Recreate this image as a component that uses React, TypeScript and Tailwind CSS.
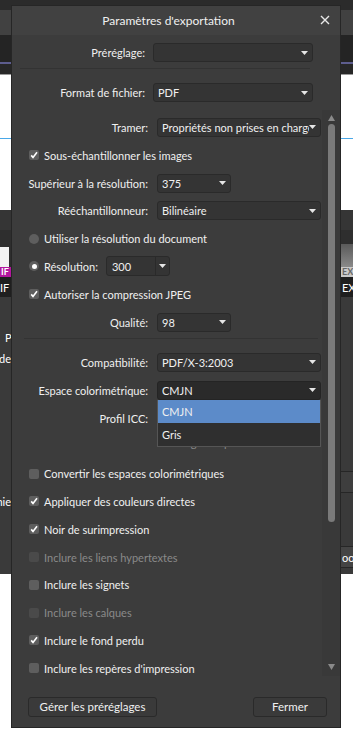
import React from 'react';

const Arrow = () => (
  <svg width="7" height="4" viewBox="0 0 7 4" className="shrink-0">
    <path d="M0 0h7L3.5 4z" fill="#e6e6e6" />
  </svg>
);

interface DropdownProps {
  value?: string;
  className?: string;
  open?: boolean;
  children?: React.ReactNode;
}

const Dropdown: React.FC<DropdownProps> = ({ value = '', className = '', open = false, children }) => (
  <div className={`relative h-[19px] ${className}`}>
    <div
      className={`flex h-full items-center rounded-[3px] border pl-[4px] pr-[4px] ${
        open ? 'border-[#242424] bg-[#2a2a2a]' : 'border-[#2a2a2a] bg-[#343434]'
      }`}
    >
      <span className="flex-1 overflow-hidden whitespace-nowrap">{value}</span>
      <Arrow />
    </div>
    {children}
  </div>
);

const Check: React.FC<{ checked?: boolean; disabled?: boolean }> = ({ checked, disabled }) => (
  <span
    className={`flex h-[10px] w-[10px] shrink-0 items-center justify-center rounded-[2px] ${
      disabled ? 'bg-[#4a4a4a]' : 'bg-[#5e5e5e]'
    }`}
  >
    {checked && (
      <svg width="8" height="8" viewBox="0 0 8 8">
        <path d="M1.2 4.4 3 6.4 7 1.2" stroke="#fff" strokeWidth="1.6" fill="none" />
      </svg>
    )}
  </span>
);

const Radio: React.FC<{ selected?: boolean }> = ({ selected }) => (
  <span className="flex h-[10px] w-[10px] shrink-0 items-center justify-center rounded-full bg-[#5e5e5e]">
    {selected && <span className="h-[5px] w-[5px] rounded-full bg-white" />}
  </span>
);

const Row: React.FC<{ className?: string; children?: React.ReactNode }> = ({ className = '', children }) => (
  <div className={`flex h-[27.8px] shrink-0 items-center ${className}`}>{children}</div>
);

const LabelRow: React.FC<{ label: string; children?: React.ReactNode }> = ({ label, children }) => (
  <Row>
    <span className="w-[136px] shrink-0 whitespace-nowrap text-right">{label}</span>
    <div className="ml-[9px]">{children}</div>
  </Row>
);

const CheckRow: React.FC<{ label: string; checked?: boolean; disabled?: boolean; indent?: boolean; className?: string }> = ({
  label,
  checked,
  disabled,
  indent,
  className = '',
}) => (
  <Row className={`${indent ? 'pl-[145px]' : 'pl-[17px]'} ${className}`}>
    <Check checked={checked} disabled={disabled} />
    <span className={`ml-[5px] whitespace-nowrap ${disabled ? 'text-[#8a8a8a]' : ''}`}>{label}</span>
  </Row>
);

const Background = () => (
  <div className="flex h-full flex-col">
    <div className="h-[10px] bg-[#2b2b2b]" />
    <div className="h-[25px] bg-[#414141]" />
    <div className="h-[27px] bg-[#242424]" />
    <div className="h-[2px] bg-[#5d5d8e]" />
    <div className="h-[10px] bg-[#272727]" />
    <div className="h-px bg-[#9a9a9a]" />
    <div className="h-[63px] bg-white" />
    <div className="h-px bg-[#4aa8e8]" />
    <div className="h-[71px] bg-white" />
    <div className="h-[20px] bg-[#353535]" />
    <div className="h-[10px] bg-[#2e2e2e]" />
    <div className="flex h-[27px] justify-between bg-[#2e2e2e]">
      <div className="mt-[7px] w-[9px] bg-[#f2f2f2]" />
      <div className="mt-[4px] w-[12px] bg-gradient-to-b from-[#5a5a5a] to-[#8a8a8a]" />
    </div>
    <div className="flex h-[10px] justify-between bg-[#2e2e2e] text-[9px] leading-[10px] font-bold">
      <div className="w-[11px] overflow-hidden bg-[#b3179e] pl-[1px] text-white">IF</div>
      <div className="w-[12px] overflow-hidden bg-[#c9c9c9] pl-[1px] text-[#666]">EX</div>
    </div>
    <div className="flex h-[20px] items-center justify-between bg-[#1f1f1f] text-[11px]">
      <div className="w-[11px] overflow-hidden text-white">IF</div>
      <div className="w-[12px] overflow-hidden pl-[1px] text-white">EX</div>
    </div>
    <div className="flex h-[277px] justify-between bg-[#3a3a3a] text-[11px] text-white">
      <div className="flex w-[11px] flex-col">
        <div className="mt-[33px] pl-[5px]">P</div>
        <div className="mt-[6px] flex justify-end overflow-hidden whitespace-nowrap">Mode</div>
        <div className="mt-[128px] flex justify-end overflow-hidden whitespace-nowrap">Graphie</div>
      </div>
      <div className="flex w-[12px] flex-col">
        <div className="mt-[174px] h-px bg-[#262626]" />
        <div className="h-[20px] bg-[#3e3e3e]" />
        <div className="h-px bg-[#262626]" />
        <div className="h-[53px]" />
        <div className="h-px bg-[#262626]" />
        <div className="flex h-[20px] items-center overflow-hidden whitespace-nowrap bg-[#444] pl-[1px]">oo</div>
        <div className="h-px bg-[#262626]" />
      </div>
    </div>
    <div className="flex-1 bg-white" />
  </div>
);

const App: React.FC = () => {
  return (
    <div className="relative h-[745px] w-[353px] overflow-hidden font-['Lato',sans-serif] text-[11px] leading-[15px] text-[#f0f0f0]">
      <Background />

      <div className="absolute left-[11px] top-[5px] flex h-[723px] w-[330px] flex-col border border-[#262626] bg-[#3c3c3c]">
        <div className="relative flex h-[29px] shrink-0 items-center justify-center bg-[#414141] pr-[15px] text-[12px]">
          Paramètres d'exportation
          <svg className="absolute right-[10px] top-[9px]" width="10" height="10" viewBox="0 0 10 10">
            <path d="M1 1l8 8M9 1L1 9" stroke="#e8e8e8" strokeWidth="1.4" />
          </svg>
        </div>

        <div className="mt-[8px] flex items-center">
          <span className="w-[133px] text-right">Préréglage:</span>
          <Dropdown className="ml-[8px] w-[160px]" />
        </div>
        <div className="mx-[8px] mt-[6px] h-px w-[290px] bg-[#333333]" />
        <div className="mt-[14px] flex items-center">
          <span className="w-[133px] text-right">Format de fichier:</span>
          <Dropdown className="ml-[8px] w-[160px]" value="PDF" />
        </div>

        <div className="mt-[8px] flex h-[566px] shrink-0">
          <div className="flex w-[310px] flex-col overflow-hidden pt-[3.6px]">
            <LabelRow label="Tramer:">
              <Dropdown className="w-[164px]" value="Propriétés non prises en charge" />
            </LabelRow>
            <CheckRow label="Sous-échantillonner les images" checked />
            <LabelRow label="Supérieur à la résolution:">
              <Dropdown className="w-[74px]" value="375" />
            </LabelRow>
            <LabelRow label="Rééchantillonneur:">
              <Dropdown className="w-[164px]" value="Bilinéaire" />
            </LabelRow>
            <Row className="pl-[17px]">
              <Radio />
              <span className="ml-[5px]">Utiliser la résolution du document</span>
            </Row>
            <Row className="pl-[17px]">
              <Radio selected />
              <span className="ml-[5px]">Résolution:</span>
              <div className="ml-[8px] flex h-[20px] w-[64px] items-center rounded-[3px] border border-[#2a2a2a] bg-[#343434]">
                <span className="flex-1 pl-[5px]">300</span>
                <div className="flex h-full w-[14px] items-center justify-center border-l border-[#2a2a2a]">
                  <Arrow />
                </div>
              </div>
            </Row>
            <CheckRow label="Autoriser la compression JPEG" checked />
            <LabelRow label="Qualité:">
              <Dropdown className="w-[74px]" value="98" />
            </LabelRow>
            <div className="h-[12.6px] shrink-0 pl-[12px] pr-[4px] pt-[2px]">
              <div className="h-px bg-[#333333]" />
            </div>
            <LabelRow label="Compatibilité:">
              <Dropdown className="w-[164px]" value="PDF/X-3:2003" />
            </LabelRow>
            <div className="relative z-10">
              <LabelRow label="Espace colorimétrique:">
                <Dropdown className="w-[164px]" value="CMJN" open>
                  <div className="absolute left-0 top-[19px] w-full border border-t-0 border-[#555] bg-[#2f2f2f]">
                    <div className="flex h-[23px] items-center bg-[#5c8bc9] pl-[4px]">CMJN</div>
                    <div className="flex h-[23px] items-center pl-[4px]">Gris</div>
                  </div>
                </Dropdown>
              </LabelRow>
            </div>
            <LabelRow label="Profil ICC:">
              <Dropdown className="w-[164px]" value="" />
            </LabelRow>
            <CheckRow label="Intégrer le profil ICC" disabled indent className="items-start pt-[3px]" />
            <CheckRow label="Convertir les espaces colorimétriques" />
            <CheckRow label="Appliquer des couleurs directes" checked />
            <CheckRow label="Noir de surimpression" checked />
            <CheckRow label="Inclure les liens hypertextes" disabled />
            <CheckRow label="Inclure les signets" />
            <CheckRow label="Inclure les calques" disabled />
            <CheckRow label="Inclure le fond perdu" checked />
            <CheckRow label="Inclure les repères d'impression" />
            <CheckRow label="Inclure les métadonnées" checked />
          </div>
          <div className="flex w-[18px] flex-col items-center bg-[#393939] pb-[6px] pt-[5px]">
            <svg width="7" height="6" viewBox="0 0 7 6">
              <path d="M3.5 0 7 6H0z" fill="#8a8a8a" />
            </svg>
            <div className="mt-[3px] h-[398px] w-[7px] rounded-full bg-[#7a7a7a]" />
            <svg className="mt-auto" width="7" height="6" viewBox="0 0 7 6">
              <path d="M0 0h7L3.5 6z" fill="#8a8a8a" />
            </svg>
          </div>
        </div>

        <div className="mt-[21px] flex justify-between pl-[16px] pr-[13px]">
          <button className="h-[20px] w-[129px] whitespace-nowrap rounded-[3px] border border-[#2a2a2a] bg-[#3a3a3a] text-[11.5px] leading-none">
            Gérer les préréglages
          </button>
          <button className="h-[20px] w-[74px] rounded-[3px] border border-[#2a2a2a] bg-[#3a3a3a] text-[11.5px] leading-none">
            Fermer
          </button>
        </div>
      </div>
    </div>
  );
};

export default App;
